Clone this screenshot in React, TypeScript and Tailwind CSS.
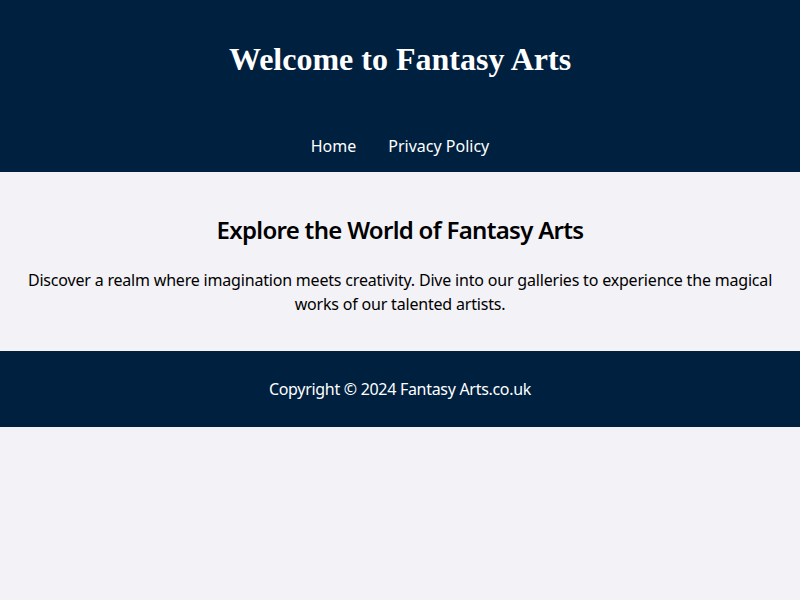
import React from 'react';

const NAV_LINKS = ['Home', 'Privacy Policy'];

export default function App() {
  return (
    <div className="min-h-screen bg-[#f3f2f7] font-['Noto_Sans',sans-serif] text-black">
      {/* Header */}
      <header className="bg-[#00203f] text-white h-[172px] flex flex-col items-center">
        <h1 className="mt-[41px] text-[32px] leading-[37px] font-bold font-['Liberation_Serif',serif]">
          Welcome to Fantasy Arts
        </h1>
        <nav className="mt-[56px]">
          <ul className="flex gap-8 text-base leading-6">
            {NAV_LINKS.map(link => (
              <li key={link}>
                <a href="#" className="text-white">{link}</a>
              </li>
            ))}
          </ul>
        </nav>
      </header>

      {/* Main */}
      <main className="h-[179px] px-5 pt-10 text-center">
        <h2 className="text-2xl leading-9 font-semibold tracking-[-0.7px]">Explore the World of Fantasy Arts</h2>
        <p className="mt-5 text-base leading-6 tracking-[-0.19px]">
          Discover a realm where imagination meets creativity. Dive into our galleries to experience the magical works of our talented artists.
        </p>
      </main>

      {/* Footer */}
      <footer className="bg-[#00203f] text-white h-[76px] flex items-center justify-center">
        <p className="text-base leading-6 tracking-[-0.3px]">Copyright © 2024 Fantasy Arts.co.uk</p>
      </footer>
    </div>
  );
}
